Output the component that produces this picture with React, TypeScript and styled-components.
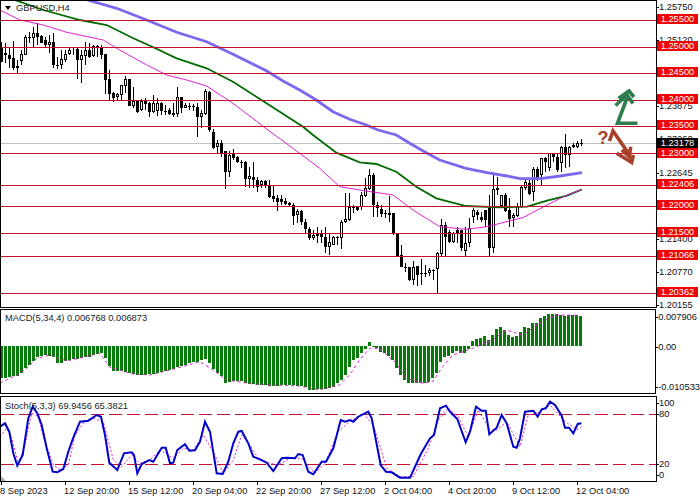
import styled, { createGlobalStyle } from "styled-components";

type Candle = [number, number, number, number, "b" | "w"];
type Pt = [number, number];

// all chart data is written at 3x scale, like the crops it was read from
const candlesA: Candle[] = [
  [125, 140, 185, 185, "b"], [130, 158, 165, 190, "w"], [140, 165, 178, 205, "b"], [122, 175, 205, 210, "b"],
  [180, 198, 205, 220, "b"], [150, 163, 183, 195, "w"], [105, 110, 165, 165, "w"], [95, 110, 112, 130, "b"],
  [82, 100, 115, 140, "w"], [68, 100, 110, 135, "b"], [105, 108, 130, 130, "b"], [110, 120, 135, 140, "b"],
  [105, 127, 135, 160, "w"], [100, 125, 195, 205, "b"], [170, 195, 197, 208, "b"], [150, 178, 195, 208, "w"],
  [150, 162, 180, 185, "w"], [140, 150, 162, 165, "w"], [140, 147, 150, 165, "w"], [140, 148, 180, 237, "b"],
  [150, 165, 180, 250, "w"], [125, 150, 168, 195, "w"], [130, 150, 170, 175, "b"], [135, 138, 168, 170, "w"],
  [135, 137, 140, 172, "b"], [135, 143, 165, 178, "b"], [162, 162, 240, 282, "b"], [210, 238, 283, 300, "b"],
  [275, 280, 293, 307, "b"], [280, 283, 290, 303, "w"], [255, 255, 285, 300, "w"], [228, 238, 258, 280, "w"],
  [237, 237, 317, 317, "b"], [262, 303, 318, 325, "w"], [300, 303, 335, 340, "b"], [298, 302, 330, 333, "w"],
  [295, 303, 312, 330, "b"], [305, 310, 337, 350, "b"], [285, 310, 335, 340, "w"], [295, 308, 332, 348, "w"],
  [305, 310, 332, 345, "b"], [315, 332, 334, 345, "b"], [325, 330, 342, 345, "b"], [310, 338, 345, 352, "b"],
  [262, 292, 342, 352, "w"], [290, 292, 325, 340, "b"], [310, 315, 323, 325, "w"], [308, 317, 320, 330, "b"],
  [312, 318, 322, 332, "b"], [310, 322, 352, 410, "b"], [330, 340, 352, 385, "w"], [268, 272, 342, 345, "w"],
  [272, 275, 390, 395, "b"], [388, 395, 443, 447, "b"], [420, 430, 440, 458, "w"], [420, 430, 458, 470, "b"],
  [452, 453, 515, 567, "b"], [452, 465, 515, 530, "w"],
];

const candlesB: Candle[] = [
  [58, 70, 85, 90, "b"], [78, 80, 95, 100, "b"], [90, 95, 100, 115, "b"], [92, 95, 147, 172, "b"],
  [110, 138, 146, 175, "w"], [97, 140, 150, 175, "b"], [140, 150, 172, 185, "b"], [150, 152, 165, 175, "w"],
  [150, 152, 165, 175, "b"], [150, 165, 200, 205, "b"], [165, 198, 207, 215, "b"], [195, 203, 215, 242, "b"],
  [195, 208, 215, 225, "b"], [203, 212, 222, 225, "b"], [215, 220, 225, 228, "b"], [220, 225, 257, 285, "b"],
  [238, 243, 255, 280, "w"], [240, 243, 277, 285, "b"], [268, 277, 298, 308, "b"], [292, 298, 325, 330, "b"],
  [300, 315, 325, 330, "w"], [290, 312, 318, 340, "b"], [300, 312, 320, 340, "b"], [292, 320, 350, 368, "b"],
  [308, 335, 352, 375, "w"], [318, 320, 345, 345, "w"], [318, 320, 325, 345, "b"], [270, 275, 325, 358, "w"],
  [190, 268, 277, 278, "w"], [190, 230, 270, 272, "w"], [225, 232, 235, 250, "b"], [228, 232, 240, 243, "b"],
  [185, 195, 230, 240, "w"], [145, 175, 198, 200, "w"], [118, 135, 178, 180, "w"], [130, 135, 225, 262, "b"],
  [215, 225, 235, 262, "b"], [225, 237, 252, 262, "b"], [240, 250, 253, 265, "b"], [198, 250, 255, 275, "b"],
  [248, 248, 310, 315, "b"], [310, 310, 378, 378, "b"], [345, 375, 412, 412, "b"], [400, 410, 412, 425, "b"],
  [410, 412, 450, 452, "b"], [392, 410, 450, 465, "w"], [408, 408, 435, 468, "b"], [388, 430, 433, 465, "b"],
  [405, 428, 432, 440, "b"], [415, 420, 430, 437, "w"], [418, 420, 422, 450, "b"], [365, 370, 418, 490, "w"],
  [268, 285, 372, 378, "w"], [275, 285, 320, 378, "b"], [300, 305, 335, 340, "b"], [305, 310, 335, 340, "w"],
  [290, 300, 310, 340, "b"], [300, 300, 355, 362, "b"], [290, 340, 362, 378, "w"],
  // right part of the main panel
  [265, 295, 340, 350, "w"], [235, 240, 262, 280, "w"], [240, 245, 255, 270, "b"], [245, 262, 270, 275, "b"],
  [240, 240, 270, 290, "b"], [195, 235, 355, 382, "b"], [135, 178, 355, 368, "w"], [140, 175, 180, 195, "b"],
  [195, 195, 228, 235, "w"], [190, 195, 242, 245, "b"], [205, 240, 268, 290, "b"], [250, 255, 265, 290, "w"],
  [220, 232, 258, 262, "w"], [165, 170, 232, 235, "w"], [150, 155, 175, 180, "w"], [150, 160, 192, 195, "b"],
  [110, 118, 185, 212, "w"], [110, 118, 150, 152, "b"], [85, 85, 135, 168, "w"], [80, 85, 95, 125, "b"],
  [68, 70, 115, 122, "w"], [70, 72, 80, 95, "b"], [70, 82, 120, 125, "b"], [48, 50, 100, 125, "w"],
  [12, 52, 75, 115, "b"], [48, 50, 76, 112, "w"], [38, 45, 50, 55, "w"], [33, 38, 52, 55, "w"], [28, 38, 40, 47, "b"],
];

const candles: Candle[] = [
  ...candlesA,
  ...candlesB.map(([a, b, c, d, k]): Candle => [a + 390, b + 390, c + 390, d + 390, k]),
];

const slowMa: Pt[] = [
  [255, -3], [270, 2], [350, 25], [440, 60], [530, 97], [620, 125], [699, 163],
  [799, 212], [849, 243], [899, 270], [949, 300], [999, 335], [1049, 358], [1099, 375], [1134, 390],
  [1189, 405], [1229, 430], [1279, 458], [1319, 480], [1398, 505],
  [1461, 518], [1521, 528], [1561, 536], [1621, 536], [1681, 528], [1746, 518],
];

const midMa: Pt[] = [
  [30, -5], [45, 0], [130, 30], [240, 60], [320, 75], [400, 115], [460, 142], [530, 175], [620, 205], [699, 245],
  [789, 303], [909, 380], [939, 405], [1009, 458], [1079, 487], [1129, 492], [1189, 515],
  [1249, 560], [1309, 595], [1398, 618],
  [1501, 622], [1581, 620], [1641, 602], [1701, 587], [1746, 568],
];

const fastMa: Pt[] = [
  [-5, 28], [60, 60], [130, 75], [200, 97], [310, 120], [350, 145], [440, 195], [500, 225], [560, 240], [620, 258], [699, 310],
  [804, 390], [899, 460], [959, 505], [1019, 560], [1099, 573], [1179, 585], [1239, 630], [1319, 680], [1398, 688],
  [1461, 680], [1501, 670], [1571, 652], [1641, 615], [1701, 585], [1746, 568],
];

const macdBars: number[] = [
  295, 293, 290, 288, 287, 280, 265, 255, 243, 232, 228, 226, 228, 232, 248, 248, 243, 240, 238, 238, 235, 232, 230, 225,
  222, 220, 235, 258, 272, 272, 272, 276, 280, 282, 285, 285, 284, 282, 282, 278, 275, 272, 270, 268, 262, 258, 254, 250,
  246, 246, 240, 236, 250, 268, 278, 288, 308, 306, 304, 302, 304, 308, 312, 312, 315, 316, 316, 318, 318, 318, 316, 316,
  316, 316, 318, 318, 322, 330, 330, 328, 328, 328, 324, 320, 308, 300, 285, 262,
  240, 235, 220, 208, 187, 200, 205, 215, 220, 228, 240, 265, 285, 300, 310, 310, 310, 310, 310, 305, 295, 278, 245, 232,
  228, 218, 212, 218, 218, 208, 183, 178, 175, 168, 180, 165, 148, 142, 150, 165, 170, 168, 155, 142, 145, 128, 128, 113,
  108, 102, 102, 102, 105, 107, 106, 105, 105, 108,
];

const macdSignal: Pt[] = [
  [0, 310], [50, 285], [75, 270], [110, 235], [150, 225], [200, 243], [250, 232], [300, 220], [330, 262], [400, 282], [450, 285],
  [520, 268], [600, 245], [640, 270], [680, 300], [760, 312], [900, 318], [960, 330], [1020, 315], [1050, 285],
  [1080, 240], [1110, 205], [1140, 205], [1190, 250], [1220, 295], [1270, 310], [1300, 305], [1330, 260], [1360, 225],
  [1390, 215], [1420, 205], [1480, 180], [1520, 150], [1570, 165], [1620, 130], [1670, 105], [1740, 106],
];

const stochMain: Pt[] = [
  [0, 95], [15, 85], [28, 110], [40, 175], [52, 212], [68, 180], [85, 70], [98, 35], [112, 55], [125, 90], [140, 160], [158, 230],
  [172, 232], [190, 222], [205, 170], [220, 128], [240, 80], [265, 77], [290, 60], [303, 65], [315, 120], [328, 203], [352, 225],
  [372, 175], [395, 172], [402, 180], [412, 235], [425, 207], [448, 195], [460, 200], [485, 158], [497, 158], [510, 205], [520, 203],
  [532, 165], [555, 148], [568, 167], [585, 166], [600, 140], [615, 80], [630, 110], [650, 235], [668, 237], [685, 200], [700, 145],
  [715, 110], [725, 108], [745, 145], [760, 185], [780, 193], [800, 203], [820, 228], [845, 190], [860, 188], [885, 190], [895, 177],
  [908, 180], [925, 230], [940, 238], [965, 200], [978, 200], [1000, 160], [1022, 75], [1035, 80], [1050, 75],
  [1060, 80], [1075, 65], [1105, 50], [1115, 70], [1142, 210], [1158, 230], [1175, 232], [1200, 248], [1230, 248], [1262, 178],
  [1290, 130], [1302, 120], [1320, 40], [1338, 32], [1350, 50], [1372, 72], [1397, 142], [1410, 110], [1428, 35], [1445, 47],
  [1457, 47], [1468, 118], [1490, 98], [1505, 60], [1520, 85], [1540, 155], [1550, 158], [1560, 130], [1575, 50], [1600, 47],
  [1613, 65], [1625, 43], [1637, 40], [1650, 20], [1665, 30], [1685, 62], [1695, 98], [1707, 98], [1720, 115], [1733, 87], [1744, 85],
];

const stochSignal: Pt[] = [
  [0, 125], [20, 100], [35, 130], [55, 205], [75, 150], [95, 55], [115, 65], [130, 125], [160, 210], [180, 225], [205, 210],
  [225, 120], [250, 85], [280, 70], [310, 80], [340, 195], [365, 215], [395, 180], [420, 205], [450, 195], [480, 165], [520, 190],
  [550, 160], [580, 165], [610, 120], [640, 170], [670, 235], [700, 195], [725, 120], [750, 150], [775, 190], [810, 205], [835, 210],
  [870, 190], [905, 190], [945, 235], [975, 205], [1015, 110], [1050, 78],
  [1090, 55], [1120, 90], [1160, 220], [1200, 245], [1240, 245], [1285, 160], [1315, 75], [1345, 40], [1375, 65], [1405, 125],
  [1435, 45], [1470, 105], [1490, 105], [1520, 80], [1560, 155], [1585, 60], [1610, 55], [1650, 30], [1690, 75], [1730, 105], [1744, 95],
];

const levels = [20.5, 47.5, 73.5, 100.5, 126.5, 153.5, 185.5, 206.5, 233.5, 256.5, 293.5];

// the 3rd and 7th tick of the price scale sit fully under a red tag, so they carry no text
const priceTicks = [
  "1.25750", "1.25120", "", "1.23875", "1.23260", "1.22645", "", "1.21400", "1.20770", "1.20155",
];

const priceTags: [number, string][] = [
  [19.5, "1.25500"], [46.5, "1.25000"], [72.5, "1.24500"], [99.5, "1.24000"], [125.5, "1.23500"],
  [153, "1.23000"], [184.5, "1.22406"], [205.5, "1.22000"], [232.5, "1.21500"], [255.5, "1.21066"], [292.5, "1.20362"],
];

const timeLabels = [
  "8 Sep 2023", "12 Sep 20:00", "15 Sep 12:00", "20 Sep 04:00", "22 Sep 20:00",
  "27 Sep 12:00", "2 Oct 04:00", "4 Oct 20:00", "9 Oct 12:00", "12 Oct 04:00",
];

const toLine = (points: Pt[], dy = 0) =>
  points.map(([x, y]) => `${(x / 3).toFixed(1)},${((y + dy) / 3).toFixed(1)}`).join(" ");

const GlobalStyle = createGlobalStyle`
  html, body {
    margin: 0;
    background: #fff;
    overflow: hidden;
  }
`;

const Terminal = styled.div`
  width: 700px;
  height: 500px;
  display: flex;
  flex-direction: column;
  font-family: "Liberation Sans", Arial, sans-serif;
  font-size: 9.3px;
  color: #111;
  background: #fff;
`;

const Panel = styled.section<{ $height: number; $gap: number }>`
  display: flex;
  height: ${(p) => p.$height}px;
  margin-top: ${(p) => p.$gap}px;
  flex-shrink: 0;
`;

const Plot = styled.div`
  position: relative;
  box-sizing: border-box;
  width: 657px;
  height: 100%;
  border: 1px solid #000;
`;

const ChartSvg = styled.svg`
  display: block;
  width: 100%;
  height: 100%;
`;

const Legend = styled.div<{ $top: number }>`
  position: absolute;
  left: 4px;
  top: ${(p) => p.$top}px;
  display: flex;
  align-items: center;
  gap: 5px;
  line-height: 12px;
  white-space: nowrap;
  color: #222;
`;

const MenuTriangle = styled.span`
  width: 0;
  height: 0;
  border-left: 3px solid transparent;
  border-right: 3px solid transparent;
  border-top: 4px solid #000;
`;

const Axis = styled.div<{ $top: number; $rows: string }>`
  position: relative;
  flex: 1;
  display: grid;
  grid-template-rows: ${(p) => p.$rows};
  align-content: start;
  padding-top: ${(p) => p.$top}px;
`;

const Tick = styled.div`
  position: relative;
  height: 12px;
  padding-left: 2px;
  line-height: 12px;
  white-space: nowrap;

  &::before {
    content: "";
    position: absolute;
    left: 0;
    top: 6px;
    width: 2px;
    height: 1px;
    background: #000;
  }
`;

const Tag = styled.div<{ $y: number; $current?: boolean }>`
  position: absolute;
  left: 0;
  top: ${(p) => p.$y - 5.5}px;
  width: 41px;
  height: 10px;
  line-height: 10px;
  text-align: center;
  color: #fff;
  background: ${(p) => (p.$current ? "#000" : "#f00000")};
`;

const TimeRow = styled.footer`
  display: flex;
  height: 18px;
  flex-shrink: 0;
`;

const TimeCell = styled.div`
  position: relative;
  width: 64px;
  line-height: 18px;
  white-space: nowrap;

  &::before {
    content: "";
    position: absolute;
    left: 1px;
    top: 0;
    width: 1px;
    height: 3px;
    background: #000;
  }
`;

function MainChart() {
  return (
    <ChartSvg viewBox="1 1 655 306">
      <line x1="1" x2="656" y1="143.5" y2="143.5" stroke="#c0c0c0" shapeRendering="crispEdges" />
      <g shapeRendering="crispEdges">
        {candles.map(([wickTop, bodyTop, bodyBottom, wickBottom, kind], i) => {
          const x = 1 + 4 * i;
          const top = Math.round(bodyTop / 3);
          const bottom = Math.max(Math.round(bodyBottom / 3), top + 1);
          return (
            <g key={i}>
              <line x1={x + 0.5} x2={x + 0.5} y1={Math.round(wickTop / 3)} y2={Math.round(wickBottom / 3)} stroke="#000" />
              {kind === "b" ? (
                <rect x={x - 1} y={top} width={3} height={bottom - top} fill="#000" />
              ) : (
                <rect x={x - 0.5} y={top + 0.5} width={2} height={bottom - top - 1} fill="#fff" stroke="#000" />
              )}
            </g>
          );
        })}
      </g>
      <polyline points={toLine(slowMa)} fill="none" stroke="#7b68ee" strokeWidth="2.8" />
      <polyline points={toLine(midMa)} fill="none" stroke="#006a00" strokeWidth="1.8" />
      <polyline points={toLine(fastMa)} fill="none" stroke="#e020d0" strokeWidth="1" />
      <g shapeRendering="crispEdges">
        {levels.map((y) => (
          <line key={y} x1="1" x2="656" y1={y} y2={y} stroke="#c8102e" />
        ))}
      </g>
      <g fill="none" stroke="#2e7d4f" strokeWidth="3.6">
        <polyline points="637.5,123.3 617.5,123.3 627,98" />
        <polyline points="615.5,105.5 627,95 633,103.5" />
        <polyline points="618.5,98.5 629,91 634,97" />
      </g>
      <g fill="none" stroke="#a8402a" strokeWidth="3.6">
        <polyline points="609.5,141 613,131 629,154" />
        <polyline points="616.7,153.3 631.7,162.5 633.3,155" />
        <polyline points="621.7,150 629.3,156.7 630.7,146.7" />
      </g>
      <text x="597.5" y="144" fontFamily="'Liberation Sans', Arial, sans-serif" fontSize="18" fontWeight="700" fill="#a8402a">?</text>
    </ChartSvg>
  );
}

function MacdChart() {
  return (
    <ChartSvg viewBox="1 310 655 83">
      <g shapeRendering="crispEdges" fill="#067a06">
        {macdBars.map((value, i) => {
          const y = 280 + value / 3;
          return <rect key={i} x={4 * i} y={Math.round(Math.min(y, 346))} width={3} height={Math.max(1, Math.round(Math.abs(y - 346)))} />;
        })}
      </g>
      <polyline points={toLine(macdSignal, 840)} fill="none" stroke="#e020d0" strokeWidth="1" strokeDasharray="3 3" />
    </ChartSvg>
  );
}

function StochChart() {
  return (
    <ChartSvg viewBox="1 397 655 84">
      <g shapeRendering="crispEdges" stroke="#c8102e" strokeDasharray="13 5">
        <line x1="1" x2="656" y1="414.5" y2="414.5" />
        <line x1="1" x2="656" y1="464.5" y2="464.5" />
      </g>
      <polyline points={toLine(stochSignal, 1185)} fill="none" stroke="#e020d0" strokeWidth="1" strokeDasharray="2 2" />
      <polyline points={toLine(stochMain, 1185)} fill="none" stroke="#0000cd" strokeWidth="2" />
      <polygon points="1,476 1,481 6,481" fill="#b0b0b0" />
    </ChartSvg>
  );
}

export default function App(): JSX.Element {
  return (
    <Terminal>
      <GlobalStyle />
      <Panel $height={308} $gap={0}>
        <Plot>
          <MainChart />
          <Legend $top={1}>
            <MenuTriangle />
            GBPUSD,H4
          </Legend>
        </Plot>
        <Axis $top={1} $rows="repeat(10, 33.11px)">
          {priceTicks.map((label, i) => (
            <Tick key={i}>{label}</Tick>
          ))}
          {priceTags.map(([y, label]) => (
            <Tag key={label} $y={y}>{label}</Tag>
          ))}
          <Tag $y={143.5} $current>1.23178</Tag>
        </Axis>
      </Panel>
      <Panel $height={85} $gap={1}>
        <Plot>
          <MacdChart />
          <Legend $top={2}>MACD(5,34,4) 0.006768 0.006873</Legend>
        </Plot>
        <Axis $top={2} $rows="30px 40px 12px">
          <Tick>0.007906</Tick>
          <Tick>0.00</Tick>
          <Tick>-0.010533</Tick>
        </Axis>
      </Panel>
      <Panel $height={86} $gap={2}>
        <Plot>
          <StochChart />
          <Legend $top={3}>Stoch(5,3,3) 69.9456 65.3821</Legend>
        </Plot>
        <Axis $top={1} $rows="11px 50px 11px 12px">
          <Tick>100</Tick>
          <Tick>80</Tick>
          <Tick>20</Tick>
          <Tick>0</Tick>
        </Axis>
      </Panel>
      <TimeRow>
        {timeLabels.map((label) => (
          <TimeCell key={label}>{label}</TimeCell>
        ))}
      </TimeRow>
    </Terminal>
  );
}
